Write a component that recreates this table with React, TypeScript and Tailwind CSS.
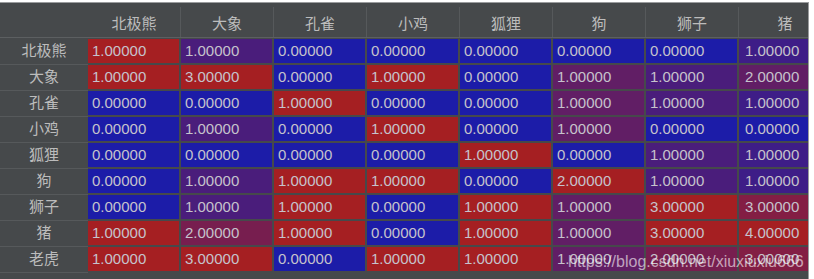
const names = ['北极熊', '大象', '孔雀', '小鸡', '狐狸', '狗', '狮子', '猪']
const rowNames = ['北极熊', '大象', '孔雀', '小鸡', '狐狸', '狗', '狮子', '猪', '老虎']

const matrix = [
  [1, 1, 0, 0, 0, 0, 0, 1],
  [1, 3, 0, 1, 0, 1, 1, 2],
  [0, 0, 1, 0, 0, 1, 1, 1],
  [0, 1, 0, 1, 0, 1, 0, 0],
  [0, 0, 0, 0, 1, 0, 1, 1],
  [0, 1, 1, 1, 0, 2, 1, 1],
  [0, 1, 1, 0, 1, 1, 3, 3],
  [1, 2, 1, 0, 1, 1, 3, 4],
  [1, 3, 0, 1, 1, 1, 2, 3],
]

const colMax = names.map((_, c) => Math.max(...matrix.map((r) => r[c])))

// blue (0) -> red (column max)
const cellColor = (v: number, max: number) => {
  const t = max ? v / max : 0
  const blue = [28, 28, 168]
  const red = [165, 31, 34]
  const mix = blue.map((b, i) => Math.round(b + (red[i] - b) * t))
  return `rgb(${mix[0]}, ${mix[1]}, ${mix[2]})`
}

const font = { fontFamily: '"Liberation Sans", "Noto Sans CJK SC", sans-serif' }

export default function App() {
  return (
    <div className="w-[814px] h-[279px] bg-white pt-[2px] pr-[5px] overflow-hidden" style={font}>
      <div className="relative h-full bg-[#46494b] border-t border-r border-[#9a9c9e] overflow-hidden">
        {/* header */}
        <div className="flex h-[35px] border-b border-[#5c5f61]">
          <div className="w-[88px] shrink-0" />
          {names.map((n) => (
            <div
              key={n}
              className="w-[93px] shrink-0 mt-[4px] border-r border-[#56595b] flex items-end justify-center pb-[2px] text-[15px] text-[#bcbcbc]"
            >
              {n}
            </div>
          ))}
        </div>

        {/* body */}
        <div className="flex flex-col pt-[1px]">
          {matrix.map((row, r) => (
            <div key={r} className="flex h-[26px]">
              <div className="w-[88px] shrink-0 flex items-center justify-center border-b border-[#56595b] text-[15px] text-[#bcbcbc]">
                {rowNames[r]}
              </div>
              <div className="flex gap-[2px] pb-[2px]">
                {row.map((v, c) => (
                  <div
                    key={c}
                    className={`w-[91px] shrink-0 flex items-center text-[15px] text-[#c6c3cc] ${c === 7 ? 'pl-[6px]' : 'pl-[4px]'}`}
                    style={{ backgroundColor: cellColor(v, colMax[c]) }}
                  >
                    {v.toFixed(5)}
                  </div>
                ))}
              </div>
            </div>
          ))}
        </div>

        <div className="absolute left-[568px] top-[247px] text-[16px] text-white/60 whitespace-nowrap">
          https://blog.csdn.net/xiuxiuxiu666
        </div>
      </div>
    </div>
  )
}
